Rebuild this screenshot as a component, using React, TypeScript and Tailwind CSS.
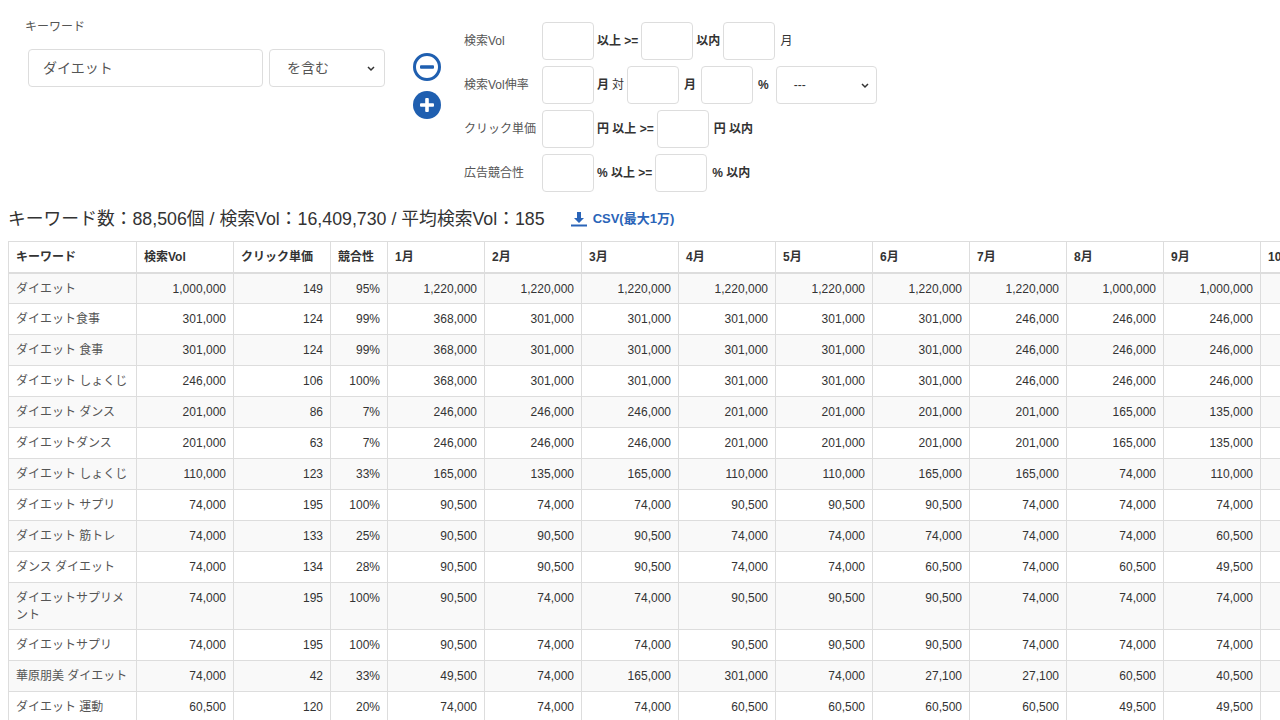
import React from "react";

const months = ["1月","2月","3月","4月","5月","6月","7月","8月","9月","10月","11月","12月"];
const rows: [string, string, string, string, string[]][] = [
  ["ダイエット","1,000,000","149","95%",["1,220,000","1,220,000","1,220,000","1,220,000","1,220,000","1,220,000","1,220,000","1,000,000","1,000,000","1,000,000","1,000,000","1,000,000"]],
  ["ダイエット食事","301,000","124","99%",["368,000","301,000","301,000","301,000","301,000","301,000","246,000","246,000","246,000","246,000","246,000","246,000"]],
  ["ダイエット 食事","301,000","124","99%",["368,000","301,000","301,000","301,000","301,000","301,000","246,000","246,000","246,000","246,000","246,000","246,000"]],
  ["ダイエット しょくじ","246,000","106","100%",["368,000","301,000","301,000","301,000","301,000","301,000","246,000","246,000","246,000","246,000","246,000","246,000"]],
  ["ダイエット ダンス","201,000","86","7%",["246,000","246,000","246,000","201,000","201,000","201,000","201,000","165,000","135,000","135,000","135,000","135,000"]],
  ["ダイエットダンス","201,000","63","7%",["246,000","246,000","246,000","201,000","201,000","201,000","201,000","165,000","135,000","135,000","135,000","135,000"]],
  ["ダイエット しょくじ","110,000","123","33%",["165,000","135,000","165,000","110,000","110,000","165,000","165,000","74,000","110,000","110,000","110,000","110,000"]],
  ["ダイエット サプリ","74,000","195","100%",["90,500","74,000","74,000","90,500","90,500","90,500","74,000","74,000","74,000","74,000","74,000","74,000"]],
  ["ダイエット 筋トレ","74,000","133","25%",["90,500","90,500","90,500","74,000","74,000","74,000","74,000","74,000","60,500","60,500","60,500","60,500"]],
  ["ダンス ダイエット","74,000","134","28%",["90,500","90,500","90,500","74,000","74,000","60,500","74,000","60,500","49,500","49,500","49,500","49,500"]],
  ["ダイエットサプリメント","74,000","195","100%",["90,500","74,000","74,000","90,500","90,500","90,500","74,000","74,000","74,000","74,000","74,000","74,000"]],
  ["ダイエットサプリ","74,000","195","100%",["90,500","74,000","74,000","90,500","90,500","90,500","74,000","74,000","74,000","74,000","74,000","74,000"]],
  ["華原朋美 ダイエット","74,000","42","33%",["49,500","74,000","165,000","301,000","74,000","27,100","27,100","60,500","40,500","40,500","40,500","40,500"]],
  ["ダイエット 運動","60,500","120","20%",["74,000","74,000","74,000","60,500","60,500","60,500","60,500","49,500","49,500","49,500","49,500","49,500"]],
];

const Box = ({ w = "w-[52px]" }: { w?: string }) => (
  <div className={`${w} h-[38px] border border-[#ddd] rounded-[4px] bg-white shrink-0`} />
);

export default function App() {
  return (
    <div className="w-[1280px] h-[720px] overflow-hidden bg-white text-[#333]" style={{ fontFamily: '"Liberation Sans", Arial, "Noto Sans CJK JP", sans-serif' }}>
      <div className="flex pt-[18px]">
        <div className="pl-[25px] w-[460px] shrink-0">
          <div className="text-[12px] text-[#555] h-[20px]">キーワード</div>
          <div className="flex items-start mt-[11px] pl-[3px]">
            <div className="w-[235px] h-[38px] border border-[#ddd] rounded-[4px] flex items-center px-[14px] text-[14px] text-[#555]">ダイエット</div>
            <div className="w-[116px] h-[38px] ml-[6px] border border-[#ddd] rounded-[4px] flex items-center justify-between pl-[17px] pr-[8px] text-[14px] text-[#555]">
              <span>を含む</span>
              <svg width="10" height="10" viewBox="0 0 10 10"><path d="M2 4l3 3 3-3" stroke="#333" strokeWidth="1.5" fill="none"/></svg>
            </div>
            <div className="ml-[27px] mt-[3px] flex flex-col gap-[8px]">
              <svg width="30" height="30" viewBox="0 0 30 30"><circle cx="15" cy="15" r="12.5" fill="none" stroke="#1f5fb0" strokeWidth="3"/><rect x="8" y="13.3" width="14" height="3.4" rx="1" fill="#1f5fb0"/></svg>
              <svg width="30" height="30" viewBox="0 0 30 30"><circle cx="15" cy="15" r="14" fill="#1f5fb0"/><rect x="8" y="13.2" width="14" height="3.6" rx="1" fill="#fff"/><rect x="13.2" y="8" width="3.6" height="14" rx="1" fill="#fff"/></svg>
            </div>
          </div>
        </div>
        <div className="flex flex-col gap-[6px] pt-[4px] text-[12px]">
          <div className="flex items-center"><span className="w-[82px] pl-[4px] text-[#555]">検索Vol</span><Box /><b className="mx-[3px]">以上 &gt;=</b><Box /><b className="mx-[3px]">以内</b><Box /><span className="ml-[5px]">月</span></div>
          <div className="flex items-center"><span className="w-[82px] pl-[4px] text-[#555]">検索Vol伸率</span><Box /><b className="ml-[3px]">月</b><span className="mx-[3px]">対</span><Box /><b className="mx-[5px]">月</b><Box /><b className="ml-[5px] mr-[7px]">%</b>
            <div className="w-[101px] h-[38px] border border-[#ddd] rounded-[4px] flex items-center justify-between pl-[17px] pr-[6px]"><span>---</span><svg width="10" height="10" viewBox="0 0 10 10"><path d="M2 4l3 3 3-3" stroke="#333" strokeWidth="1.5" fill="none"/></svg></div>
          </div>
          <div className="flex items-center"><span className="w-[82px] pl-[4px] text-[#555]">クリック単価</span><Box /><b className="mx-[3px]">円 以上 &gt;=</b><Box /><b className="ml-[5px]">円 以内</b></div>
          <div className="flex items-center"><span className="w-[82px] pl-[4px] text-[#555]">広告競合性</span><Box /><b className="mx-[3px]">% 以上 &gt;=</b><Box /><b className="ml-[5px]">% 以内</b></div>
        </div>
      </div>
      <div className="flex items-center pl-[8px] mt-[12px] h-[30px]">
        <span className="text-[17.8px] text-[#333]">キーワード数：88,506個 / 検索Vol：16,409,730 / 平均検索Vol：185</span>
        <span className="ml-[25px] flex items-center text-[13px] font-bold text-[#2a64b8]">
          <svg width="18" height="16" viewBox="0 0 18 16" className="mr-[5px]"><path d="M7 1h4v6h3l-5 5-5-5h3z" fill="#2a64b8"/><rect x="1" y="13.5" width="16" height="2" fill="#2a64b8"/></svg>
          CSV(最大1万)
        </span>
      </div>
      <div className="pl-[8px] mt-[7px]">
        <table className="border-collapse table-fixed text-[12px] text-[#333]" style={{ width: 128 + 97 * 2 + 57 + 97 * 12 }}>
          <colgroup>
            <col className="w-[128px]" /><col className="w-[97px]" /><col className="w-[97px]" /><col className="w-[57px]" />
            {months.map(m => <col key={m} className="w-[97px]" />)}
          </colgroup>
          <thead>
            <tr className="h-[31px]">
              {["キーワード","検索Vol","クリック単価","競合性",...months].map(h => (
                <th key={h} className="border border-[#ddd] border-b-2 text-left font-bold px-[7px]">{h}</th>
              ))}
            </tr>
          </thead>
          <tbody>
            {rows.map((r, i) => (
              <tr key={i} className={`${r[0].length > 10 ? "h-[47px]" : "h-[31px]"} ${i % 2 === 0 ? "bg-[#f9f9f9]" : "bg-white"}`}>
                <td className="border border-[#ddd] px-[7px] text-[#555] align-top pt-[7px] leading-[17px]">{r[0]}</td>
                {[r[1], r[2], r[3], ...r[4]].map((v, j) => (
                  <td key={j} className="border border-[#ddd] px-[7px] text-right align-top pt-[7px] leading-[17px]">{v}</td>
                ))}
              </tr>
            ))}
          </tbody>
        </table>
      </div>
    </div>
  );
}
